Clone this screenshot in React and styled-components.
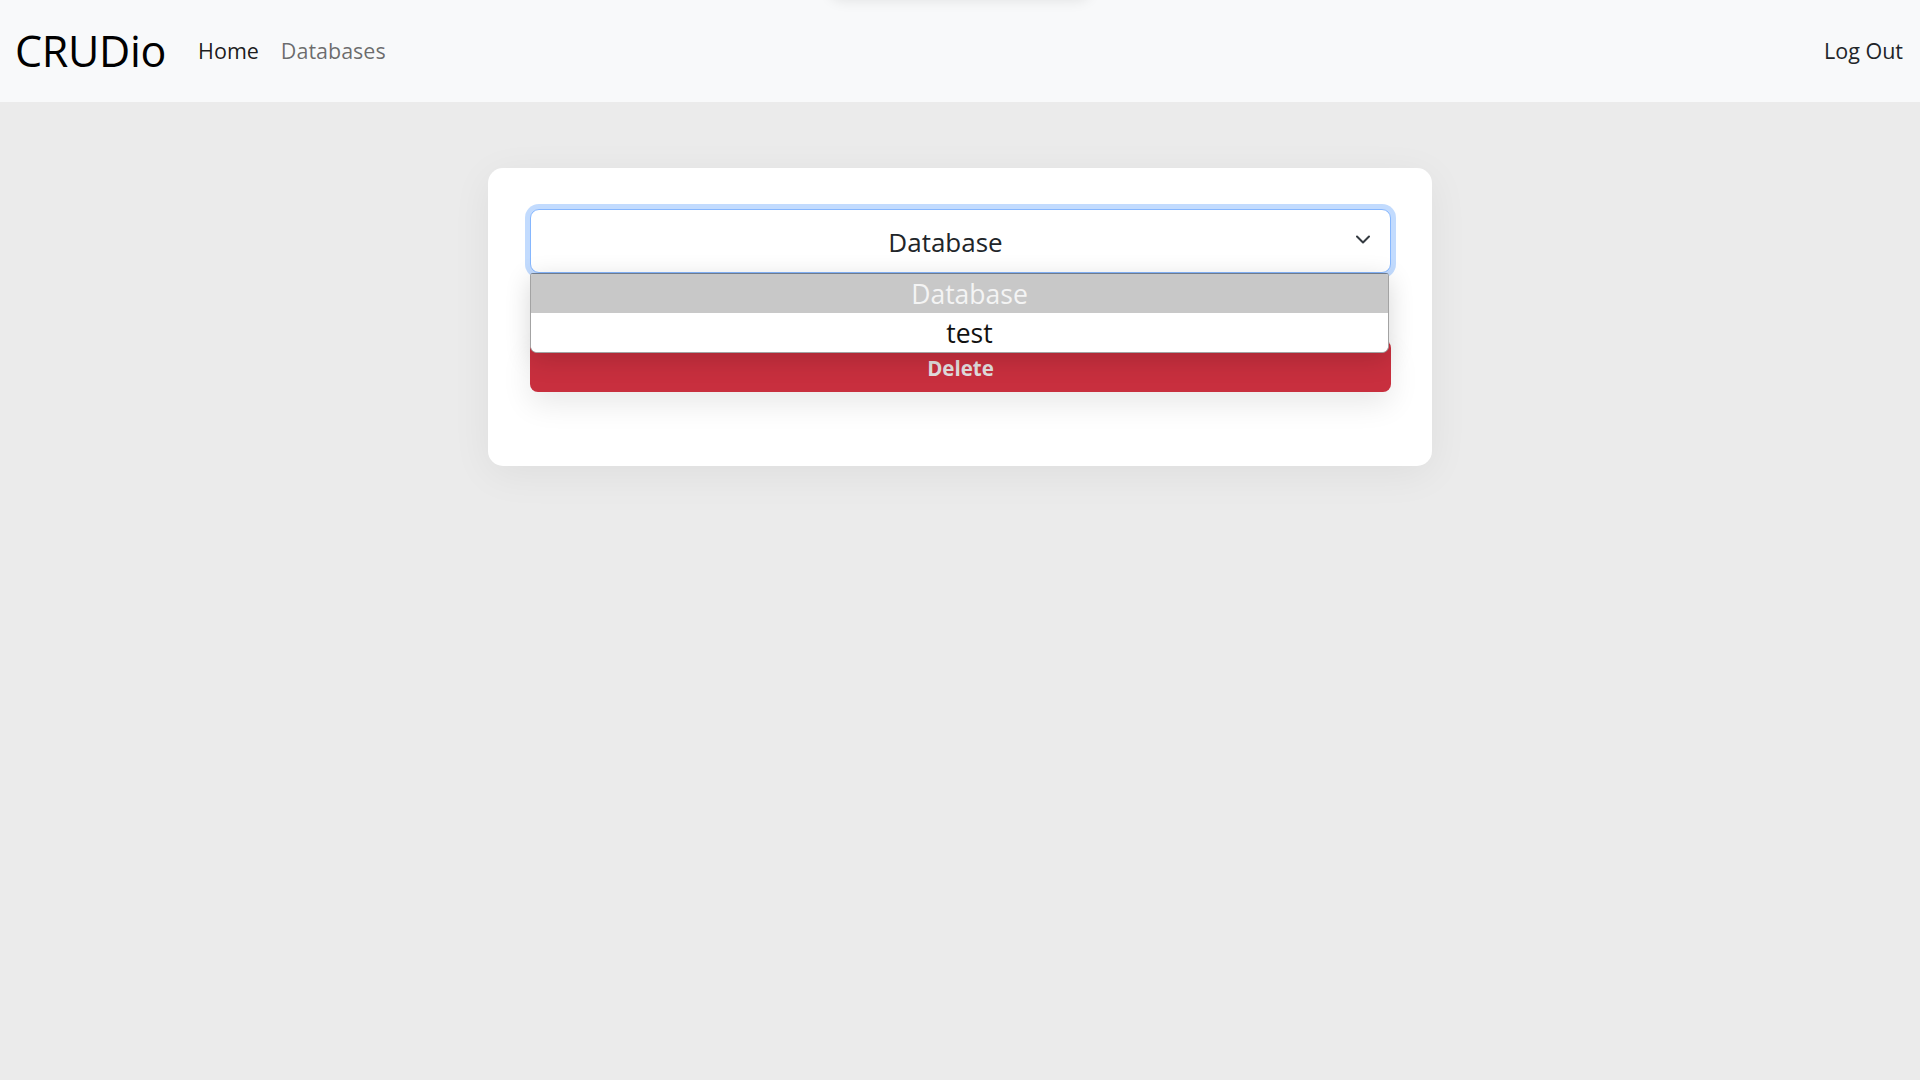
import React from "react";
import styled, { createGlobalStyle } from "styled-components";

const Global = createGlobalStyle`
  html, body { margin: 0; padding: 0; }
  body {
    background: #ebebeb;
    font-family: "Open Sans", "Noto Sans", sans-serif;
    min-height: 1080px;
    color: #212529;
  }
`;

const Page = styled.div`
  position: relative;
  min-height: 1080px;
`;

const TopGlow = styled.div`
  position: absolute;
  top: -40px;
  left: 830px;
  width: 260px;
  height: 40px;
  border-radius: 12px;
  box-shadow: 0 0 14px rgba(0, 0, 0, 0.1);
`;

const Navbar = styled.nav`
  height: 102px;
  background: #f8f9fa;
  display: flex;
  align-items: center;
  padding: 0 17px 0 15px;
  box-sizing: border-box;
`;

const Brand = styled.a`
  font-size: 43px;
  color: #000;
  margin-right: 21px;
  line-height: 1;
  padding-bottom: 2px;
  letter-spacing: -0.3px;
`;

const NavLink = styled.a`
  font-size: 21.5px;
  padding: 0 11px;
  color: ${(p) => (p.$active ? "rgba(0,0,0,0.9)" : "rgba(0,0,0,0.58)")};
  line-height: 1;
`;

const Spacer = styled.div`
  flex: 1;
`;

const LogOut = styled(NavLink)`
  color: #212529;
  padding: 0;
`;

const Main = styled.main`
  display: flex;
  justify-content: center;
  padding-top: 66px;
`;

const Card = styled.section`
  width: 944px;
  box-sizing: border-box;
  background: #fff;
  border-radius: 15px;
  padding: 41px 41px 74px 42px;
  box-shadow: 0 8px 40px rgba(0, 0, 0, 0.06);
  display: flex;
  flex-direction: column;
`;

const SelectWrap = styled.div`
  position: relative;
`;

const SelectBox = styled.div`
  height: 64px;
  box-sizing: border-box;
  border: 1px solid #86b7fe;
  border-radius: 9px;
  box-shadow: 0 0 0 5px rgba(13, 110, 253, 0.25);
  display: flex;
  align-items: center;
  justify-content: center;
  padding: 2px 45px 0 15px;
  font-size: 26px;
  color: #212529;
  position: relative;
  background: #fff;
`;

const Chevron = styled.svg`
  position: absolute;
  right: 20px;
  top: 50%;
  margin-top: -6px;
`;

const OptionList = styled.ul`
  position: absolute;
  left: 0;
  right: 2px;
  top: 64px;
  margin: 0;
  padding: 0;
  list-style: none;
  border: 1px solid #a3a3a3;
  border-top: 1px solid #6f7b8c;
  border-radius: 3px 3px 7px 7px;
  overflow: hidden;
  background: #fff;
  box-shadow: 0 6px 26px rgba(0, 0, 0, 0.16);
  z-index: 2;
`;

const Option = styled.li`
  height: 39px;
  display: flex;
  align-items: center;
  justify-content: center;
  padding-left: 20px;
  font-size: 26.5px;
  background: ${(p) => (p.$selected ? "#c8c8c8" : "#fff")};
  color: ${(p) => (p.$selected ? "#f4f4f4" : "#111")};
`;

const DeleteButton = styled.button`
  margin-top: 67px;
  height: 52px;
  border: none;
  border-radius: 8px;
  background: #c82f3e;
  color: #e2dede;
  font-family: "Open Sans", "Noto Sans", sans-serif;
  font-weight: 700;
  font-size: 20.5px;
  display: flex;
  align-items: center;
  justify-content: center;
  padding: 3px 0 0;
  box-shadow: 0 12px 30px rgba(0, 0, 0, 0.09);
`;

export default function App() {
  return (
    <Page>
      <Global />
      <TopGlow />
      <Navbar>
        <Brand>CRUDio</Brand>
        <NavLink $active>Home</NavLink>
        <NavLink>Databases</NavLink>
        <Spacer />
        <LogOut>Log Out</LogOut>
      </Navbar>
      <Main>
        <Card>
          <SelectWrap>
            <SelectBox>
              Database
              <Chevron width="14" height="9" viewBox="0 0 14 9">
                <path d="M1 1.5 L7 7.5 L13 1.5" fill="none" stroke="#343a40" strokeWidth="2" strokeLinecap="round" strokeLinejoin="round" />
              </Chevron>
            </SelectBox>
            <OptionList>
              <Option $selected>Database</Option>
              <Option>test</Option>
            </OptionList>
          </SelectWrap>
          <DeleteButton>Delete</DeleteButton>
        </Card>
      </Main>
    </Page>
  );
}
